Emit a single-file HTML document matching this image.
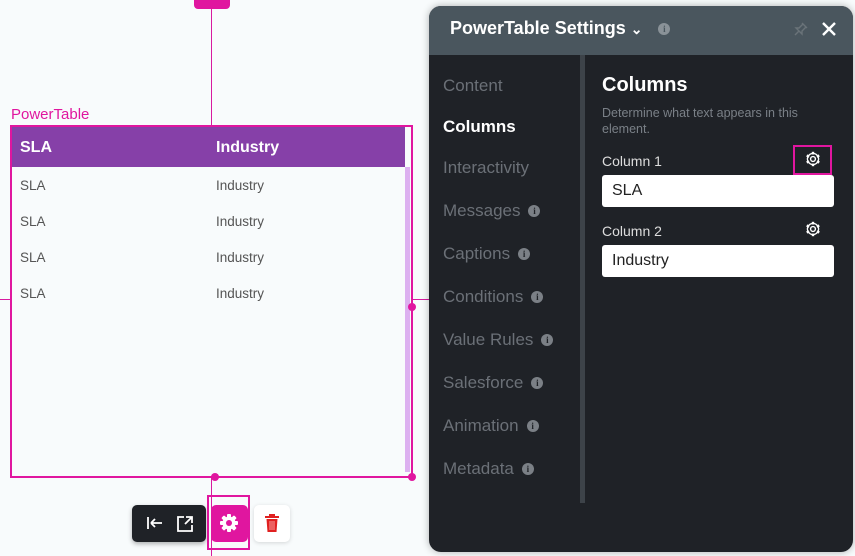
<!DOCTYPE html>
<html><head><style>
*{box-sizing:border-box;margin:0;padding:0}
body{width:855px;height:556px;background:#f8fbfc;position:relative;overflow:hidden;font-family:"Liberation Sans",sans-serif}
.a{position:absolute}
.nav{position:absolute;left:14px;font-size:17px;color:#6b7077}
.info{display:inline-block;width:12px;height:12px;border-radius:50%;background:#7b8086;color:#1f2227;font-size:9px;font-weight:bold;text-align:center;line-height:12px;margin-left:8px;vertical-align:2px;font-family:"Liberation Serif",serif}
.row{position:absolute;left:20px;font-size:13.5px;color:#555}
.inp{position:absolute;left:173px;width:232px;height:32px;background:#fff;border-radius:3px;font-size:16px;color:#222;padding:7px 10px}
</style></head><body>
<svg width="0" height="0" style="position:absolute"><defs>
<g id="gear"><g stroke-width="0"><rect x="-2" y="-9" width="4" height="18" rx="1"/><rect x="-2" y="-9" width="4" height="18" rx="1" transform="rotate(45)"/><rect x="-2" y="-9" width="4" height="18" rx="1" transform="rotate(90)"/><rect x="-2" y="-9" width="4" height="18" rx="1" transform="rotate(135)"/></g><circle r="6.5"/></g>
</defs></svg>
<div class="a" style="left:194px;top:-6px;width:36px;height:15px;background:#e0169f;border-radius:4px"></div>
<div class="a" style="left:211px;top:9px;width:1px;height:117px;background:#d81ba0"></div>
<div class="a" style="left:0;top:299px;width:10px;height:1px;background:#d81ba0"></div>
<div class="a" style="left:412px;top:299px;width:20px;height:1px;background:#d81ba0"></div>
<div class="a" style="left:11px;top:106px;font-size:15px;color:#e0169f">PowerTable</div>
<div class="a" style="left:10px;top:125px;width:403px;height:353px;border:2px solid #e0169f"></div>
<div class="a" style="left:12px;top:127px;width:393px;height:40px;background:#8640a8"></div>
<div class="a" style="left:20px;top:139px;font-size:16px;font-weight:bold;color:#fff">SLA</div>
<div class="a" style="left:216px;top:139px;font-size:16px;font-weight:bold;color:#fff">Industry</div>
<div class="a" style="left:405px;top:167px;width:5px;height:305px;background:#dcb0f0"></div>
<div class="row" style="top:178px">SLA</div><div class="row" style="left:216px;top:178px">Industry</div>
<div class="row" style="top:214px">SLA</div><div class="row" style="left:216px;top:214px">Industry</div>
<div class="row" style="top:250px">SLA</div><div class="row" style="left:216px;top:250px">Industry</div>
<div class="row" style="top:286px">SLA</div><div class="row" style="left:216px;top:286px">Industry</div>
<div class="a" style="left:408px;top:303px;width:8px;height:8px;border-radius:50%;background:#e0169f"></div>
<div class="a" style="left:408px;top:473px;width:8px;height:8px;border-radius:50%;background:#e0169f"></div>
<div class="a" style="left:211px;top:473px;width:8px;height:8px;border-radius:50%;background:#e0169f"></div>
<div class="a" style="left:211px;top:478px;width:1px;height:78px;background:#d81ba0"></div>
<div class="a" style="left:132px;top:505px;width:74px;height:37px;background:#1f2227;border-radius:5px;box-shadow:0 2px 5px rgba(0,0,0,.3)"></div>
<svg class="a" style="left:146px;top:515px" width="18" height="16"><path d="M2 2v12M5 8h11M5 8l4-4M5 8l4 4" stroke="#fff" stroke-width="1.8" fill="none"/></svg>
<svg class="a" style="left:176px;top:515px" width="18" height="18"><path d="M8 2H2v14h14v-6M10 2h6v6M16 2l-7 7" stroke="#fff" stroke-width="1.8" fill="none"/></svg>
<div class="a" style="left:211px;top:505px;width:37px;height:37px;background:#e0169f;border-radius:5px"></div>
<div class="a" style="left:207px;top:495px;width:43px;height:55px;border:2px solid #e0169f"></div>
<svg class="a" style="left:219px;top:513px" width="20" height="20"><g transform="translate(10,10)" fill="#fff"><use href="#gear"/><circle r="3" fill="#e0169f"/></g></svg>
<div class="a" style="left:254px;top:505px;width:36px;height:37px;background:#fff;border-radius:5px;box-shadow:0 1px 4px rgba(0,0,0,.15)"></div>
<svg class="a" style="left:264px;top:513px" width="16" height="20"><path d="M1 3h14v2H1zM5 1h6v2H5zM2.5 6h11l-1 13h-9z" fill="#e02020"/><path d="M6 8v9M8 8v9M10 8v9" stroke="#f7a0a0" stroke-width="1"/></svg>
<div class="a" style="left:429px;top:6px;width:424px;height:546px;background:#1f2227;border-radius:12px;overflow:hidden;box-shadow:0 0 8px rgba(0,0,0,.3)">
 <div class="a" style="left:0;top:0;width:424px;height:49px;background:#4a565e"></div>
 <div class="a" style="left:21px;top:12px;font-size:18px;font-weight:bold;color:#fff">PowerTable Settings <span style="font-size:14px">⌄</span><span class="info" style="margin-left:16px;background:#8a9298;color:#4a565e">i</span></div>
 <svg class="a" style="left:364px;top:15px" width="16" height="16"><path d="M9 2l5 5M10 3l-4 4-3 0 6 6 0-3 4-4M6 10l-4 4" stroke="#6a7379" stroke-width="1.4" fill="none"/></svg>
 <svg class="a" style="left:392px;top:15px" width="16" height="16"><path d="M2 2l12 12M14 2L2 14" stroke="#fff" stroke-width="2.4"/></svg>
 <div class="a" style="left:151px;top:49px;width:5px;height:448px;background:#3d4349"></div>
 <div class="nav" style="top:70px">Content</div>
 <div class="nav" style="top:111px;color:#fff;font-weight:bold">Columns</div>
 <div class="nav" style="top:152px">Interactivity</div>
 <div class="nav" style="top:195px">Messages<span class="info">i</span></div>
 <div class="nav" style="top:238px">Captions<span class="info">i</span></div>
 <div class="nav" style="top:281px">Conditions<span class="info">i</span></div>
 <div class="nav" style="top:324px">Value Rules<span class="info">i</span></div>
 <div class="nav" style="top:367px">Salesforce<span class="info">i</span></div>
 <div class="nav" style="top:410px">Animation<span class="info">i</span></div>
 <div class="nav" style="top:453px">Metadata<span class="info">i</span></div>
 <div class="a" style="left:173px;top:68px;font-size:20px;font-weight:bold;color:#fff">Columns</div>
 <div class="a" style="left:173px;top:99px;width:230px;font-size:12.5px;line-height:16px;color:#7a8087">Determine what text appears in this element.</div>
 <div class="a" style="left:173px;top:147px;font-size:14px;color:#ddd">Column 1</div>
 <div class="a" style="left:364px;top:139px;width:39px;height:30px;border:2px solid #e0169f"></div>
 <svg class="a" style="left:376px;top:145px" width="16" height="16"><g transform="translate(8,8) scale(0.8)" fill="none" stroke="#fff" stroke-width="1.6"><circle r="7"/><circle r="3"/></g><g transform="translate(8,8) scale(0.8)" fill="#fff"><rect x="-1.5" y="-9" width="3" height="18"/><rect x="-1.5" y="-9" width="3" height="18" transform="rotate(60)"/><rect x="-1.5" y="-9" width="3" height="18" transform="rotate(120)"/></g><circle cx="8" cy="8" r="4.6" fill="#1f2227"/><circle cx="8" cy="8" r="2.4" fill="none" stroke="#fff" stroke-width="1.4"/></svg>
 <div class="inp" style="top:169px">SLA</div>
 <div class="a" style="left:173px;top:217px;font-size:14px;color:#ddd">Column 2</div>
 <svg class="a" style="left:376px;top:215px" width="16" height="16"><g transform="translate(8,8) scale(0.8)" fill="none" stroke="#fff" stroke-width="1.6"><circle r="7"/></g><g transform="translate(8,8) scale(0.8)" fill="#fff"><rect x="-1.5" y="-9" width="3" height="18"/><rect x="-1.5" y="-9" width="3" height="18" transform="rotate(60)"/><rect x="-1.5" y="-9" width="3" height="18" transform="rotate(120)"/></g><circle cx="8" cy="8" r="4.6" fill="#1f2227"/><circle cx="8" cy="8" r="2.4" fill="none" stroke="#fff" stroke-width="1.4"/></svg>
 <div class="inp" style="top:239px">Industry</div>
</div>
</body></html>
